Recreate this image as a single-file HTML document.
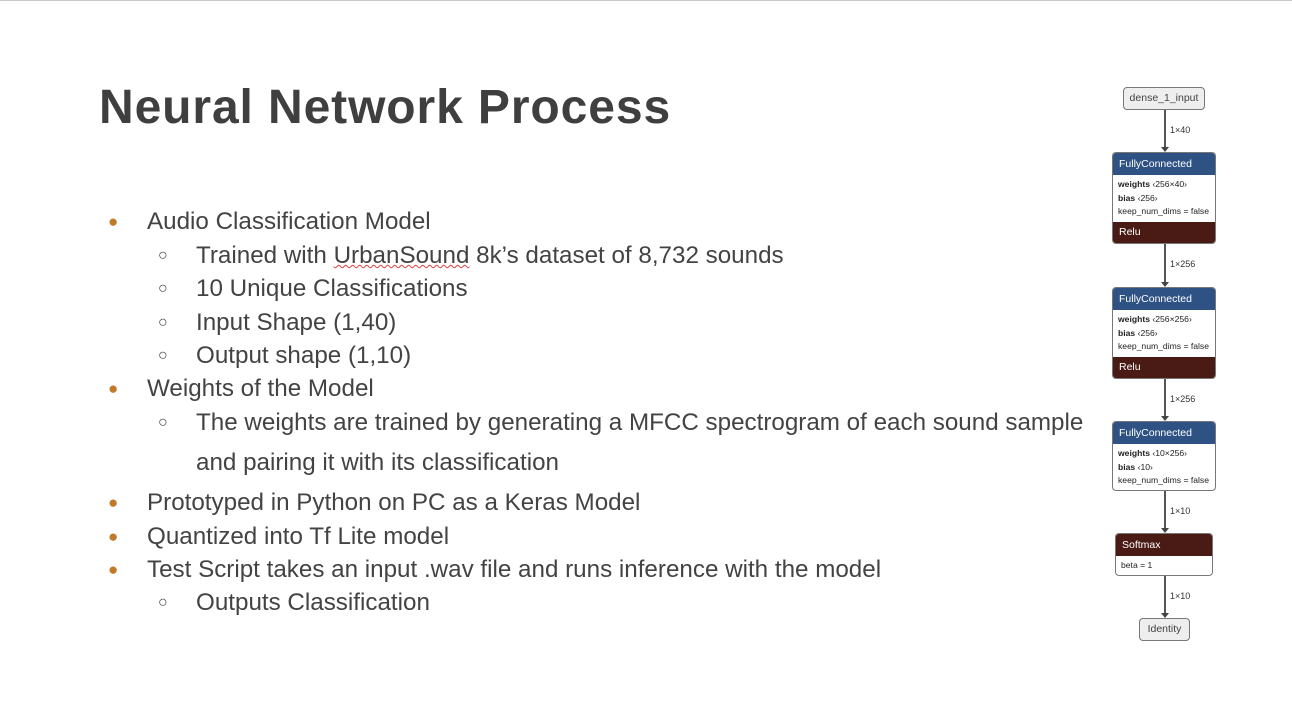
<!DOCTYPE html>
<html><head><style>
body{margin:0;width:1292px;height:727px;background:#fff;position:relative;overflow:hidden;font-family:"Liberation Sans",sans-serif;color:#434343}
.top{position:absolute;left:0;top:0;width:1292px;height:1px;background:#c8c8c8}
h1{position:absolute;left:99px;top:80px;margin:0;font-size:48px;font-weight:bold;color:#3f3f3f;letter-spacing:0.9px}
.l{position:absolute;font-size:24.2px;white-space:nowrap;line-height:30px}
.b{position:absolute;font-size:17px;color:#c07a2a;line-height:30px}
.c{position:absolute;font-size:16px;color:#434343;line-height:30px}
.box{position:absolute;border:1px solid #777;border-radius:4px;background:#fff;overflow:hidden;box-sizing:border-box}
.hd{background:#2f5285;color:#fff;font-size:10.5px;height:22px;line-height:22px;padding-left:6px}
.rd{background:#4a1a14;color:#fff;font-size:10.5px;height:21px;line-height:21px;padding-left:6px}
.bd{font-size:8.6px;color:#222;padding:3px 5px;line-height:13.5px}
.ln{position:absolute;left:1164px;width:1.5px;background:#555}
.ar{position:absolute;left:1161px;width:0;height:0;border-left:4px solid transparent;border-right:4px solid transparent;border-top:5px solid #444}
.lb{position:absolute;left:1170px;font-size:9px;color:#333}
</style></head><body>
<div class="top"></div>
<h1>Neural Network Process</h1>
<div class="b" style="left:108px;top:207px">●</div><div class="l" style="left:147px;top:207px">Audio Classification Model</div>
<div class="c" style="left:158px;top:241px">○</div><div class="l" style="left:196px;top:241px">Trained with <span style="text-decoration:underline wavy #e04040;text-decoration-thickness:1px">UrbanSound</span> 8k’s dataset of 8,732 sounds</div>
<div class="c" style="left:158px;top:274px">○</div><div class="l" style="left:196px;top:274px">10 Unique Classifications</div>
<div class="c" style="left:158px;top:308px">○</div><div class="l" style="left:196px;top:308px">Input Shape (1,40)</div>
<div class="c" style="left:158px;top:341px">○</div><div class="l" style="left:196px;top:341px">Output shape (1,10)</div>
<div class="b" style="left:108px;top:374px">●</div><div class="l" style="left:147px;top:374px">Weights of the Model</div>
<div class="c" style="left:158px;top:408px">○</div><div class="l" style="left:196px;top:408px">The weights are trained by generating a MFCC spectrogram of each sound sample</div>
<div class="l" style="left:196px;top:448px">and pairing it with its classification</div>
<div class="b" style="left:108px;top:488px">●</div><div class="l" style="left:147px;top:488px">Prototyped in Python on PC as a Keras Model</div>
<div class="b" style="left:108px;top:522px">●</div><div class="l" style="left:147px;top:522px">Quantized into Tf Lite model</div>
<div class="b" style="left:108px;top:555px">●</div><div class="l" style="left:147px;top:555px">Test Script takes an input .wav file and runs inference with the model</div>
<div class="c" style="left:158px;top:588px">○</div><div class="l" style="left:196px;top:588px">Outputs Classification</div>

<div class="box" style="left:1123px;top:87px;width:82px;height:23px;background:#eee;font-size:10.5px;text-align:center;line-height:21px">dense_1_input</div>
<div class="ln" style="top:110px;height:38px"></div><div class="ar" style="top:147px"></div><div class="lb" style="top:125px">1×40</div>
<div class="box" style="left:1112px;top:152px;width:104px;height:92px"><div class="hd">FullyConnected</div><div class="bd"><b>weights</b> ‹256×40›<br><b>bias</b> ‹256›<br>keep_num_dims = false</div><div class="rd" style="position:absolute;bottom:0;left:0;right:0">Relu</div></div>
<div class="ln" style="top:244px;height:39px"></div><div class="ar" style="top:282px"></div><div class="lb" style="top:259px">1×256</div>
<div class="box" style="left:1112px;top:287px;width:104px;height:92px"><div class="hd">FullyConnected</div><div class="bd"><b>weights</b> ‹256×256›<br><b>bias</b> ‹256›<br>keep_num_dims = false</div><div class="rd" style="position:absolute;bottom:0;left:0;right:0">Relu</div></div>
<div class="ln" style="top:379px;height:38px"></div><div class="ar" style="top:416px"></div><div class="lb" style="top:394px">1×256</div>
<div class="box" style="left:1112px;top:421px;width:104px;height:70px"><div class="hd">FullyConnected</div><div class="bd"><b>weights</b> ‹10×256›<br><b>bias</b> ‹10›<br>keep_num_dims = false</div></div>
<div class="ln" style="top:491px;height:38px"></div><div class="ar" style="top:528px"></div><div class="lb" style="top:506px">1×10</div>
<div class="box" style="left:1115px;top:533px;width:98px;height:43px"><div class="rd" style="height:22px;line-height:22px">Softmax</div><div class="bd">beta = 1</div></div>
<div class="ln" style="top:576px;height:38px"></div><div class="ar" style="top:613px"></div><div class="lb" style="top:591px">1×10</div>
<div class="box" style="left:1139px;top:618px;width:51px;height:23px;background:#eee;font-size:10.5px;text-align:center;line-height:21px">Identity</div>
</body></html>
